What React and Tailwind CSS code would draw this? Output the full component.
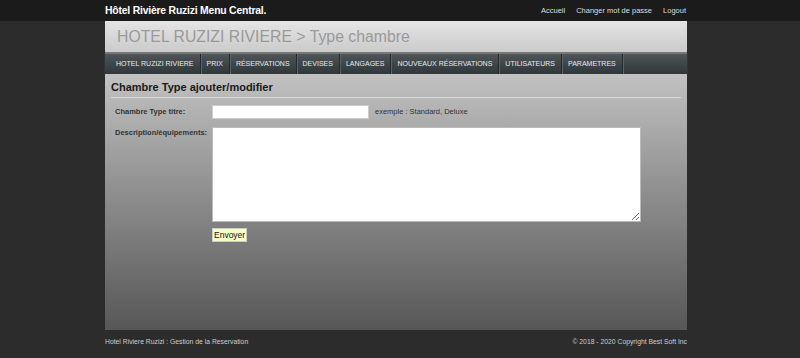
import React from 'react';

const navItems = ['HOTEL RUZIZI RIVIERE', 'PRIX', 'RÉSERVATIONS', 'DEVISES', 'LANGAGES', 'NOUVEAUX RÉSERVATIONS', 'UTILISATEURS', 'PARAMETRES'];

const App = () => {
    return (
        <div className="w-[800px] h-[358px] bg-[#2c2c2c] font-['Liberation_Sans',Arial,sans-serif] overflow-hidden">
            {/* top bar */}
            <div className="h-[21px] bg-[#1b1b1b]">
                <div className="w-[582px] ml-[105px] h-full flex items-center justify-between">
                    <span className="text-white font-bold text-[10.4px] tracking-[-0.2px]">Hôtel Rivière Ruzizi Menu Central.</span>
                    <ul className="flex gap-[11px] text-[7.5px] text-[#ddd] pr-[1px]">
                        <li>Accueil</li>
                        <li>Changer mot de passe</li>
                        <li>Logout</li>
                    </ul>
                </div>
            </div>

            <div className="w-[582px] ml-[105px]">
                {/* header */}
                <div className="h-[31px] bg-gradient-to-b from-[#e4e4e4] to-[#cbcbcb] flex items-center px-[12px]">
                    <h1 className="text-[15.8px] text-[#9a9a9a] leading-none">HOTEL RUZIZI RIVIERE &gt; Type chambre</h1>
                </div>

                {/* nav */}
                <div className="h-[22px] border-t-[2px] border-[#777] bg-gradient-to-b from-[#4e5559] to-[#30373a] flex items-stretch pl-[5px] shadow-[0_1px_1px_#555]">
                    {navItems.map((item) => (
                        <div key={item} className="flex items-center px-[6px] text-[7px] text-[#e6e8ee] border-r border-[#222a2d] shadow-[1px_0_0_#5c6367]">
                            {item}
                        </div>
                    ))}
                </div>

                {/* content */}
                <div className="h-[256px] bg-gradient-to-b from-[#c2c2c2] to-[#575757] px-[6px] pt-[6px]">
                    <h2 className="text-[11px] font-bold text-[#1a1a1a] pb-[3px] border-b border-[#d8d8d8] leading-[14px]">Chambre Type ajouter/modifier</h2>
                    <div className="mt-[7px] pl-[4px] text-[7.5px]">
                        <div className="flex items-center">
                            <label className="w-[97px] font-bold text-[#333]">Chambre Type titre:</label>
                            <input className="w-[157px] h-[14px] bg-white border border-[#ccc]" />
                            <span className="ml-[6px] text-[#333]">exemple : Standard, Deluxe</span>
                        </div>
                        <div className="flex items-start mt-[8px]">
                            <label className="w-[97px] font-bold text-[#333]">Description/équipements:</label>
                            <textarea className="w-[429px] h-[95px] bg-white border border-[#bbb] resize" />
                        </div>
                        <div className="pl-[97px] mt-[6px]">
                            <button className="h-[14px] px-[1px] bg-[#f5ffc8] border border-[#ccc] text-[8.5px] text-[#111] leading-none">Envoyer</button>
                        </div>
                    </div>
                </div>

                {/* footer */}
                <div className="flex justify-between text-[6.8px] text-[#ccc] mt-[7px]">
                    <span>Hotel Riviere Ruzizi : Gestion de la Reservation</span>
                    <span>© 2018 - 2020 Copyright Best Soft Inc</span>
                </div>
            </div>
        </div>
    );
};

export default App;
